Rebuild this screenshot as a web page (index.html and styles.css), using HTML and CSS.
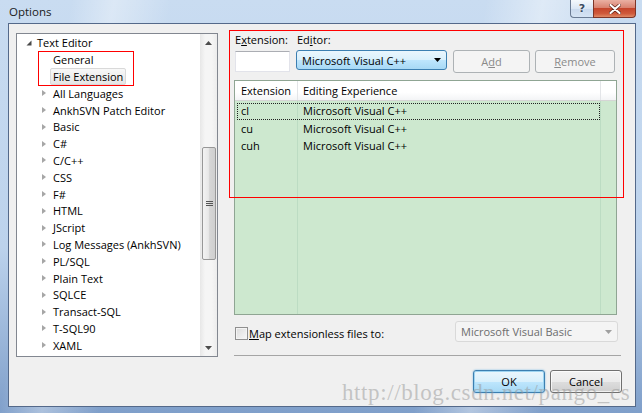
FILE: index.html
```html
<!DOCTYPE html>
<html lang="en">
<head>
    <meta charset="UTF-8">
    <title>Options</title>
    <link rel="stylesheet" href="styles.css">
</head>
<body>
    <div class="window">
        <div class="titlebar">
            <span class="title">Options</span>
            <div class="caption-buttons">
                <div class="cap-btn help">?</div>
                <div class="cap-btn close">
                    <svg width="12" height="10" viewBox="0 0 12 10"><path d="M1.5 1 L10.5 9 M10.5 1 L1.5 9" stroke="#5a1d12" stroke-width="3.4" stroke-linecap="round"/><path d="M1.5 1 L10.5 9 M10.5 1 L1.5 9" stroke="#fff" stroke-width="2.2" stroke-linecap="round"/></svg>
                </div>
            </div>
        </div>

        <div class="client">
            <!-- left: category tree -->
            <div class="tree">
                <div class="tree-items">
                    <div class="tree-row lvl0"><span class="exp"><svg width="6" height="6" viewBox="0 0 6 6"><polygon points="5.5,0.5 5.5,5.5 0.5,5.5" fill="#4a4a4a"/></svg></span><span class="label">Text Editor</span></div>
                    <div class="tree-row lvl1"><span class="exp"></span><span class="label">General</span></div>
                    <div class="tree-row lvl1"><span class="exp"></span><span class="label selected">File Extension</span></div>
                    <div class="tree-row lvl1"><span class="exp closed"></span><span class="label">All Languages</span></div>
                    <div class="tree-row lvl1"><span class="exp closed"></span><span class="label">AnkhSVN Patch Editor</span></div>
                    <div class="tree-row lvl1"><span class="exp closed"></span><span class="label">Basic</span></div>
                    <div class="tree-row lvl1"><span class="exp closed"></span><span class="label">C#</span></div>
                    <div class="tree-row lvl1"><span class="exp closed"></span><span class="label">C/C++</span></div>
                    <div class="tree-row lvl1"><span class="exp closed"></span><span class="label">CSS</span></div>
                    <div class="tree-row lvl1"><span class="exp closed"></span><span class="label">F#</span></div>
                    <div class="tree-row lvl1"><span class="exp closed"></span><span class="label">HTML</span></div>
                    <div class="tree-row lvl1"><span class="exp closed"></span><span class="label">JScript</span></div>
                    <div class="tree-row lvl1"><span class="exp closed"></span><span class="label">Log Messages (AnkhSVN)</span></div>
                    <div class="tree-row lvl1"><span class="exp closed"></span><span class="label">PL/SQL</span></div>
                    <div class="tree-row lvl1"><span class="exp closed"></span><span class="label">Plain Text</span></div>
                    <div class="tree-row lvl1"><span class="exp closed"></span><span class="label">SQLCE</span></div>
                    <div class="tree-row lvl1"><span class="exp closed"></span><span class="label">Transact-SQL</span></div>
                    <div class="tree-row lvl1"><span class="exp closed"></span><span class="label">T-SQL90</span></div>
                    <div class="tree-row lvl1"><span class="exp closed"></span><span class="label">XAML</span></div>
                </div>
                <div class="vscroll">
                    <div class="sb-btn"><svg width="7" height="4" viewBox="0 0 7 4"><polygon points="3.5,0 7,4 0,4" fill="#4d4d4d"/></svg></div>
                    <div class="sb-track">
                        <div class="sb-thumb">
                            <svg width="7" height="6" viewBox="0 0 7 6"><path d="M0 0.5 H7 M0 2.5 H7 M0 4.5 H7" stroke="#555" stroke-width="1"/></svg>
                        </div>
                    </div>
                    <div class="sb-btn"><svg width="7" height="4" viewBox="0 0 7 4"><polygon points="0,0 7,0 3.5,4" fill="#4d4d4d"/></svg></div>
                </div>
            </div>

            <!-- right: file extension settings -->
            <div class="settings">
                <div class="label-row">
                    <span class="lbl-ext">E<u>x</u>tension:</span>
                    <span class="lbl-editor">Ed<u>i</u>tor:</span>
                </div>
                <div class="control-row">
                    <div class="textbox"></div>
                    <div class="combo active">
                        <span>Microsoft Visual C++</span>
                        <svg width="7" height="4" viewBox="0 0 7 4"><polygon points="0,0 7,0 3.5,4" fill="#000"/></svg>
                    </div>
                    <div class="btn disabled add">A<u>d</u>d</div>
                    <div class="btn disabled remove"><u>R</u>emove</div>
                </div>

                <div class="listview">
                    <div class="lv-header">
                        <div class="col c1">Extension</div>
                        <div class="col c2">Editing Experience</div>
                        <div class="col c3"></div>
                    </div>
                    <div class="lv-body">
                        <div class="lv-row focused"><span class="cell c1">cl</span><span class="cell c2">Microsoft Visual C++</span></div>
                        <div class="lv-row"><span class="cell c1">cu</span><span class="cell c2">Microsoft Visual C++</span></div>
                        <div class="lv-row"><span class="cell c1">cuh</span><span class="cell c2">Microsoft Visual C++</span></div>
                    </div>
                </div>

                <div class="map-row">
                    <span class="checkbox"></span>
                    <span class="map-label"><u>M</u>ap extensionless files to:</span>
                    <div class="combo disabled">
                        <span>Microsoft Visual Basic</span>
                        <svg width="7" height="4" viewBox="0 0 7 4"><polygon points="0,0 7,0 3.5,4" fill="#a0a0a0"/></svg>
                    </div>
                </div>

                <div class="separator"></div>

                <div class="dialog-buttons">
                    <div class="btn default">OK</div>
                    <div class="btn">Cancel</div>
                </div>
            </div>
        </div>

        <!-- red annotation boxes drawn over the dialog -->
        <div class="annot annot-tree"></div>
        <div class="annot annot-editor"></div>
        <div class="watermark">http://blog.csdn.net/pango_cs</div>
    </div>
</body>
</html>
```

FILE: styles.css
```css
* {
    margin: 0;
    padding: 0;
    box-sizing: border-box;
}

body {
    width: 642px;
    height: 413px;
    overflow: hidden;
    font-family: 'Open Sans', 'DejaVu Sans', sans-serif;
    font-size: 11px;
    color: #000;
}

.window {
    position: relative;
    width: 642px;
    height: 413px;
    padding: 0 6px 6px 8px;
    background:
        linear-gradient(100deg, rgba(255,255,255,0) 10%, rgba(255,255,255,0.35) 16%, rgba(255,255,255,0) 24%, rgba(255,255,255,0) 68%, rgba(255,255,255,0.4) 76%, rgba(255,255,255,0) 86%),
        linear-gradient(180deg, #c9dcf1 0%, #bcd2ec 60%, #7f9fca 100%);
    display: flex;
    flex-direction: column;
}

/* title bar */

.titlebar {
    height: 23px;
    display: flex;
    align-items: flex-start;
    margin-left: -8px;
    margin-right: -6px;
}

.title {
    padding-left: 9px;
    line-height: 23px;
    font-size: 11.5px;
    color: #1a1a1a;
}

.caption-buttons {
    margin-left: auto;
    margin-right: 6px;
    display: flex;
}

.cap-btn {
    height: 18px;
    display: flex;
    align-items: center;
    justify-content: center;
    border: 1px solid #6a7b94;
    border-top: none;
}

.help {
    width: 23px;
    border-right: none;
    border-radius: 0 0 0 4px;
    background: linear-gradient(180deg, rgba(255,255,255,0.75) 0%, rgba(222,232,245,0.7) 50%, rgba(196,212,234,0.7) 51%, rgba(214,228,244,0.8) 100%);
    font-family: 'DejaVu Sans', sans-serif;
    font-size: 11px;
    font-weight: bold;
    color: #3a4a60;
    text-shadow: 0 0 2px #fff;
}

.close {
    width: 43px;
    border-color: #7d3528;
    border-radius: 0 0 4px 0;
    background: linear-gradient(180deg, #eab0a3 0%, #d98270 45%, #c5452c 50%, #cf5a3c 80%, #e08a66 100%);
}

/* client area */

.client {
    flex: 1;
    display: flex;
    gap: 16px;
    padding: 9px 0 0 7px;
    background: #f0f0f0;
    border: 1px solid #54698a;
}

/* tree view */

.tree {
    width: 202px;
    height: 324px;
    display: flex;
    background: #fff;
    border: 1px solid #828790;
}

.tree-items {
    flex: 1;
    overflow: hidden;
    padding-top: 0.5px;
}

.tree-row {
    display: flex;
    align-items: center;
    height: 16.8px;
    white-space: nowrap;
}

.lvl0 {
    padding-left: 6px;
}

.lvl1 {
    padding-left: 22px;
}

.exp {
    width: 14px;
    height: 8px;
    padding-left: 3px;
    display: flex;
    align-items: center;
}

.exp.closed::before {
    content: "";
    width: 0;
    height: 0;
    border-style: solid;
    border-width: 3.5px 0 3.5px 4px;
    border-color: transparent transparent transparent #a6a6a6;
}

.label {
    margin-left: -3px;
    padding: 0 2px;
    line-height: 15px;
    border: 1px solid transparent;
    border-radius: 2px;
}

.label.selected {
    background: linear-gradient(180deg, #f8f8f8, #e5e5e5);
    border-color: #d9d9d9;
}

.vscroll {
    width: 17px;
    display: flex;
    flex-direction: column;
    background: linear-gradient(90deg, #e7e7e7, #f5f5f5 30%, #f5f5f5 70%, #ececec);
}

.sb-btn {
    height: 17px;
    display: flex;
    align-items: center;
    justify-content: center;
}

.sb-track {
    flex: 1;
    padding: 96px 1px 0 2px;
}

.sb-thumb {
    height: 113px;
    display: flex;
    align-items: center;
    justify-content: center;
    border: 1px solid #979797;
    border-radius: 2px;
    background: linear-gradient(90deg, #f3f3f3, #e8e8e8 45%, #d6d6d6 55%, #cfcfcf);
}

/* right side */

.settings {
    width: 388px;
    display: flex;
    flex-direction: column;
}

.label-row {
    height: 14px;
    line-height: 14px;
    display: flex;
}

.lbl-ext {
    margin-left: 1px;
    width: 62px;
}

.control-row {
    margin-top: 3px;
    display: flex;
    align-items: flex-start;
}

.textbox {
    margin: 1px 0 0 1px;
    width: 55px;
    height: 21px;
    background: #fff;
    border: 1px solid #e2e3ea;
    border-top-color: #abadb3;
}

.combo {
    display: flex;
    align-items: center;
    justify-content: space-between;
    padding: 0 5px 0 5px;
    border-radius: 3px;
}

.combo.active {
    margin-left: 6px;
    width: 151px;
    height: 20px;
    border: 1px solid #3c7fb1;
    background: linear-gradient(180deg, #eaf6fd 0%, #d9f0fc 50%, #bee6fd 51%, #a7d9f5 100%);
}

.btn {
    height: 23px;
    display: flex;
    align-items: center;
    justify-content: center;
    border: 1px solid #707070;
    border-radius: 3px;
    background: linear-gradient(180deg, #f2f2f2 0%, #ebebeb 50%, #dddddd 51%, #cfcfcf 100%);
    box-shadow: inset 0 0 0 1px rgba(255,255,255,0.7);
}

.btn.disabled {
    color: #8a8a8a;
    border-color: #adb2b5;
    background: #f4f4f4;
    box-shadow: none;
}

.add {
    margin-left: 6px;
    width: 77px;
}

.remove {
    margin-left: 5px;
    width: 80px;
}

/* list view */

.listview {
    margin-top: 7px;
    width: 383px;
    height: 235px;
    display: flex;
    flex-direction: column;
    border: 1px solid #8fa593;
    background: #cde8cf;
}

.lv-header {
    height: 20px;
    display: flex;
    background: linear-gradient(180deg, #ffffff 0%, #ffffff 60%, #f3f4f6 100%);
    border-bottom: 1px solid #d5d5d5;
}

.col {
    line-height: 19px;
    border-right: 1px solid #e3e5e8;
}

.col.c1 {
    width: 63px;
    padding-left: 6px;
}

.col.c2 {
    width: 303px;
    padding-left: 5px;
}

.col.c3 {
    flex: 1;
    border-right: none;
}

.lv-body {
    flex: 1;
    padding-top: 1px;
    background-image:
        linear-gradient(90deg, transparent 62px, #bcdcc3 62px, #bcdcc3 63px, transparent 63px),
        linear-gradient(90deg, transparent 365px, #bcdcc3 365px, #bcdcc3 366px, transparent 366px);
}

.lv-row {
    position: relative;
    height: 17.5px;
    display: flex;
    align-items: center;
}

.lv-row.focused::after {
    content: "";
    position: absolute;
    left: 2px;
    right: 16px;
    top: 1px;
    bottom: 0;
    border: 1px dotted #222;
}

.cell.c1 {
    width: 63px;
    padding-left: 6px;
}

.cell.c2 {
    padding-left: 5px;
}

/* bottom controls */

.map-row {
    margin-top: 6px;
    height: 21px;
    padding-top: 3px;
    display: flex;
    align-items: center;
}

.checkbox {
    margin-left: 1px;
    width: 13px;
    height: 13px;
    border: 1px solid #8f8f8f;
    background: linear-gradient(135deg, #dcdcdc, #f7f7f7);
    box-shadow: inset 0 0 0 1px #f4f4f4;
}

.map-label {
    margin-left: 1px;
}

.combo.disabled {
    align-self: flex-start;
    margin: -3px 4px 0 auto;
    width: 163px;
    height: 21px;
    color: #6d6d6d;
    border: 1px solid #d9d9d9;
    background: #f4f4f4;
}

.separator {
    margin-top: 13px;
    width: 387px;
    height: 1px;
    background: #a5a5a5;
}

.dialog-buttons {
    margin-top: 14px;
    display: flex;
    justify-content: flex-end;
    gap: 5px;
}

.dialog-buttons .btn {
    width: 72px;
}

.btn.default {
    border-color: #3c7fb1;
    background: linear-gradient(180deg, #eaf6fd 0%, #d9f0fc 50%, #bee6fd 51%, #a7d9f5 100%);
    box-shadow: inset 0 0 0 1px #9ed4f1, 0 0 2px #6fb5e2;
}

/* overlays */

.annot {
    position: absolute;
    border: 1px solid #f00;
}

.annot-tree {
    left: 38px;
    top: 51px;
    width: 96px;
    height: 35px;
}

.annot-editor {
    left: 229px;
    top: 30px;
    width: 395px;
    height: 168px;
}

.watermark {
    position: absolute;
    left: 342px;
    top: 380px;
    font-family: 'Liberation Serif', serif;
    font-size: 23px;
    letter-spacing: 0.6px;
    color: rgba(150, 150, 150, 0.5);
    white-space: nowrap;
}
```
